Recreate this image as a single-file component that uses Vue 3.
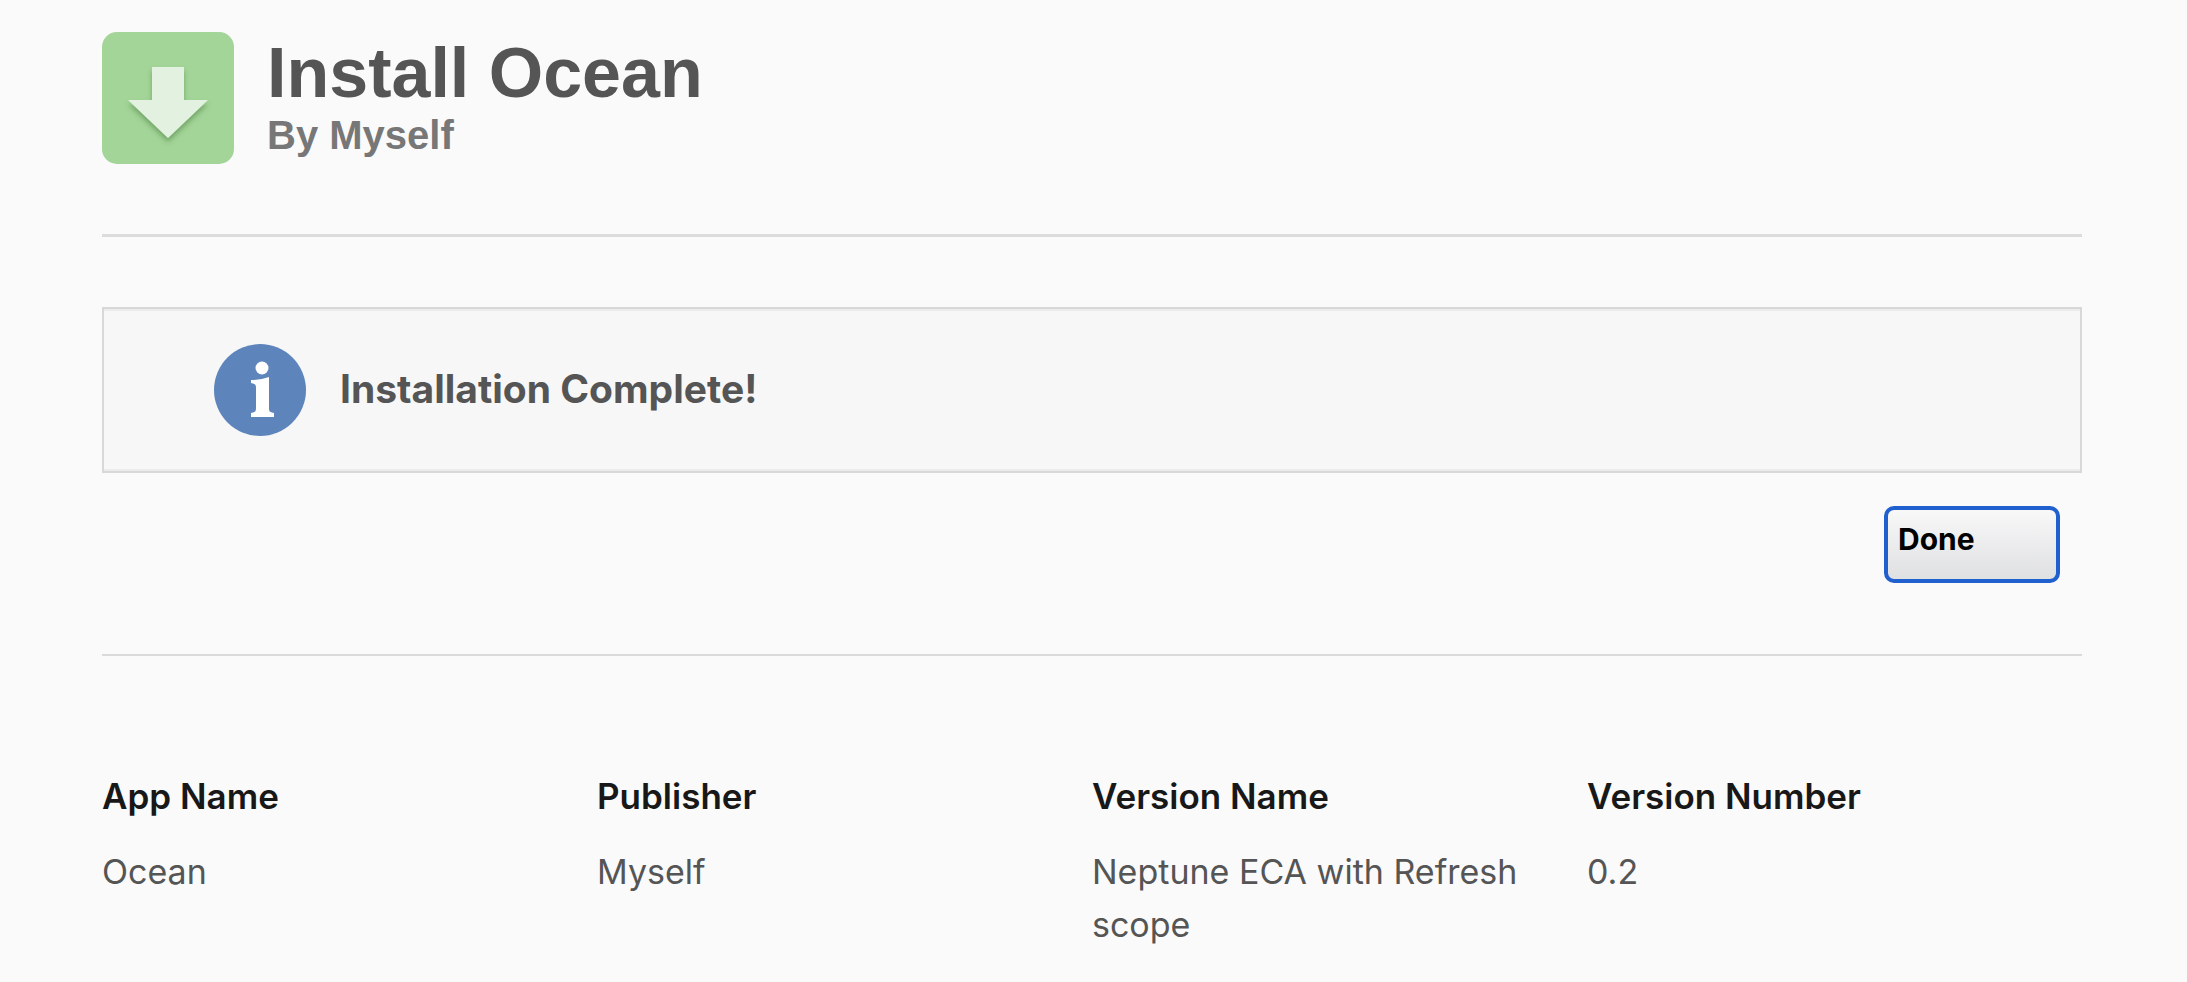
<script setup>
const details = [
  { label: 'App Name', value: 'Ocean' },
  { label: 'Publisher', value: 'Myself' },
  { label: 'Version Name', value: 'Neptune ECA with Refresh scope' },
  { label: 'Version Number', value: '0.2' },
]
</script>

<template>
  <main class="page">
    <header class="header">
      <svg class="app-icon" viewBox="0 0 132 132" aria-hidden="true">
        <defs>
          <filter id="arrow-shadow" x="-20%" y="-20%" width="140%" height="150%">
            <feDropShadow dx="0" dy="4" stdDeviation="2.5" flood-color="#3f7a38" flood-opacity="0.5" />
          </filter>
        </defs>
        <rect width="132" height="132" rx="15" fill="#a3d498" />
        <path d="M50 35H82V68H106L66 106L26 68H50Z" fill="#e3f2e0" filter="url(#arrow-shadow)" />
      </svg>
      <div>
        <h1 class="title">Install Ocean</h1>
        <p class="byline">By Myself</p>
      </div>
    </header>

    <section class="notice" role="status">
      <svg class="info-icon" viewBox="0 0 92 92" aria-hidden="true">
        <circle cx="46" cy="46" r="46" fill="#5d85bc" />
        <circle cx="48" cy="24" r="6.5" fill="#fff" />
        <path d="M37 36Q47 36 55 33V65Q55 68 58 68.500L60 69V73H37V69L39 68.500Q42 68 42 65V43Q42 40 39 39.500L37 39Z" fill="#fff" />
      </svg>
      <strong class="notice-text">Installation Complete!</strong>
    </section>

    <div class="actions">
      <button class="done" type="button">Done</button>
    </div>

    <table class="details">
      <thead>
        <tr>
          <th v-for="item in details" :key="item.label" scope="col">{{ item.label }}</th>
        </tr>
      </thead>
      <tbody>
        <tr>
          <td v-for="item in details" :key="item.label">{{ item.value }}</td>
        </tr>
      </tbody>
    </table>
  </main>
</template>

<style>
body {
  background: #fafafa;
}
</style>

<style scoped>
.page {
  padding: 32px 105px 16px 102px;
  font-family: Inter, "Liberation Sans", sans-serif;
  color: #555;
}
.header {
  display: flex;
  gap: 33px;
  padding-bottom: 70px;
  border-bottom: 3px solid #dcdcdc;
  font-family: "Liberation Sans", Arial, sans-serif;
}
.app-icon {
  width: 132px;
  height: 132px;
}
.title {
  margin: 0;
  font-size: 70px;
  line-height: 82px;
  color: #555;
}
.byline {
  margin: 0;
  font-size: 40px;
  line-height: 42px;
  font-weight: 700;
  color: #777;
}
.notice {
  display: flex;
  align-items: center;
  gap: 34px;
  margin-top: 70px;
  padding: 35px 110px;
  border: 2px solid #d8d8d9;
  box-shadow: inset 0 2px #ececec, inset 0 -2px #ececec;
  background: #f7f7f7;
}
.info-icon {
  width: 92px;
  height: 92px;
}
.notice-text {
  padding-bottom: 2px;
  font-size: 39px;
  line-height: 48px;
}
.actions {
  display: flex;
  justify-content: flex-end;
  padding: 33px 22px 71px;
  border-bottom: 2px solid #dadada;
}
.done {
  display: flex;
  align-items: flex-start;
  width: 176px;
  height: 77px;
  padding: 10px;
  border: 4px solid #205fce;
  border-radius: 10px;
  background: linear-gradient(#f8f8f9, #dfe0e1);
  color: #000;
  font-family: inherit;
  font-size: 30px;
  line-height: 38px;
  font-weight: 700;
}
.details {
  width: 100%;
  margin-top: 114px;
  border-collapse: collapse;
  table-layout: fixed;
  font-size: 34px;
  line-height: 53px;
}
.details th,
.details td {
  padding: 0 64px 22px 0;
  text-align: left;
  vertical-align: top;
}
.details th {
  color: #181818;
  font-size: 35px;
  font-weight: 600;
}
</style>
